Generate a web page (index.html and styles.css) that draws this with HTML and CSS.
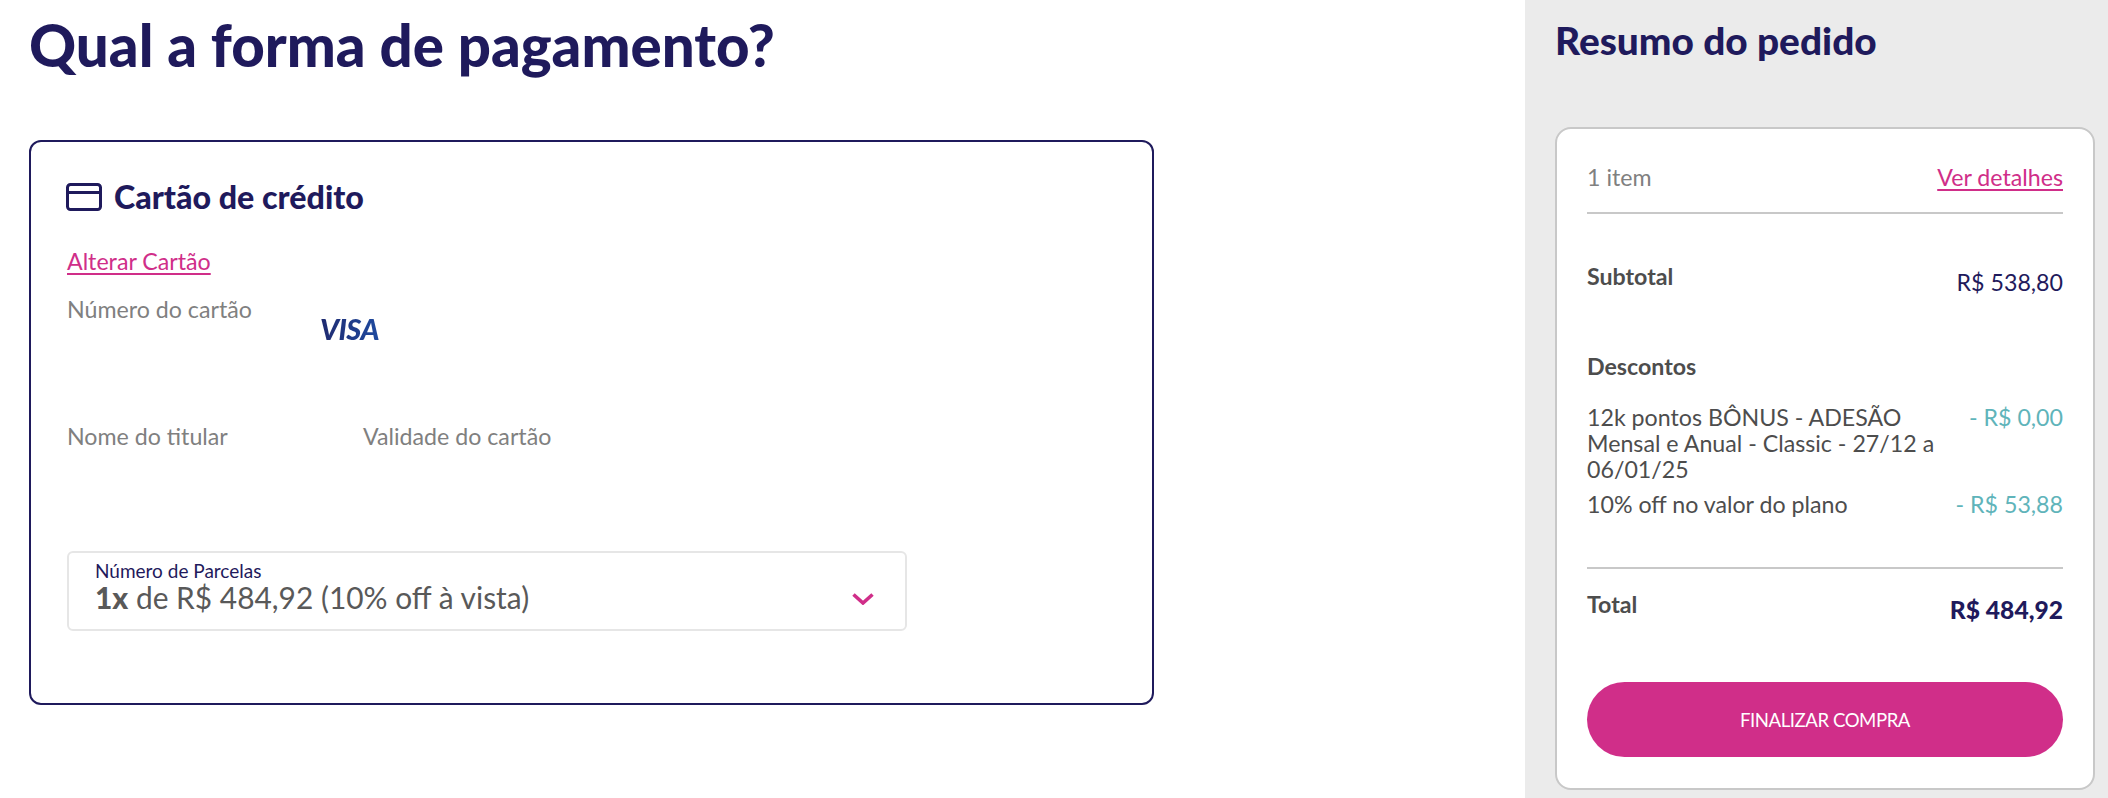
FILE: index.html
```html
<!DOCTYPE html>
<html lang="pt-BR">
<head>
<meta charset="utf-8">
<title>Qual a forma de pagamento?</title>
<link rel="stylesheet" href="styles.css">
</head>
<body>
<div class="page">
  <main class="main">
    <h1 class="title">Qual a forma de pagamento?</h1>
    <section class="pay-card">
      <div class="pay-head">
        <svg class="card-icon" viewBox="0 0 36 28" width="36" height="28" aria-hidden="true">
          <rect x="1.5" y="1.5" width="33" height="25" rx="3" fill="none" stroke="#1f1a5c" stroke-width="3"/>
          <path d="M2 9.5h32" stroke="#1f1a5c" stroke-width="3"/>
        </svg>
        <h2 class="pay-title">Cartão de crédito</h2>
      </div>
      <a class="link change" href="#">Alterar Cartão</a>
      <div class="number-row">
        <span class="label">Número do cartão</span>
        <span class="visa">VISA</span>
      </div>
      <div class="holder-row">
        <span class="label holder">Nome do titular</span>
        <span class="label">Validade do cartão</span>
      </div>
      <div class="select">
        <div class="select-text">
          <div class="select-label">Número de Parcelas</div>
          <div class="select-value"><b>1x</b> de R$ 484,92 (10% off à vista)</div>
        </div>
        <svg class="chevron" viewBox="0 0 22 12" width="22" height="12" aria-hidden="true">
          <path d="M1.5 1.5 11 10l9.5-8.5" fill="none" stroke="#d02e89" stroke-width="3.6"/>
        </svg>
      </div>
    </section>
  </main>
  <aside class="aside">
    <h2 class="aside-title">Resumo do pedido</h2>
    <section class="summary">
      <div class="row items">
        <span class="muted">1 item</span>
        <a class="link" href="#">Ver detalhes</a>
      </div>
      <div class="row subtotal">
        <span class="strong">Subtotal</span>
        <span class="navy price-low">R$ 538,80</span>
      </div>
      <div class="strong disc-title">Descontos</div>
      <div class="row disc">
        <span class="disc-name">12k pontos BÔNUS - ADESÃO Mensal e Anual - Classic - 27/12 a 06/01/25</span>
        <span class="teal">- R$ 0,00</span>
      </div>
      <div class="row disc second">
        <span class="disc-name">10% off no valor do plano</span>
        <span class="teal">- R$ 53,88</span>
      </div>
      <div class="row total">
        <span class="strong">Total</span>
        <span class="total-value price-low">R$ 484,92</span>
      </div>
      <button class="cta" type="button">FINALIZAR COMPRA</button>
    </section>
  </aside>
</div>
</body>
</html>
```
FILE: styles.css
```css
* { box-sizing: border-box; }
html, body { margin: 0; height: 100%; }
body {
  background: #fff;
  font-family: "Lato", "Noto Sans", sans-serif;
  font-size: 23.2px;
  color: #4d4d4d;
  overflow: hidden;
}
h1, h2 { margin: 0; }
.page { display: flex; height: 798px; }
.main { width: 1525px; padding-left: 29px; }
.title {
  font-size: 58.2px;
  line-height: 70px;
  font-weight: 900;
  color: #1f1a5c;
  padding-top: 10px;
  margin-bottom: 60px;
}
.pay-card {
  width: 1125px;
  height: 565px;
  padding: 40px 36px 0;
  border: 2px solid #1f1a5c;
  border-radius: 12px;
}
.pay-head { display: flex; align-items: center; gap: 12px; height: 30px; margin-left: -1px; }
.card-icon { flex: none; }
.pay-title { font-size: 32.2px; line-height: 30px; font-weight: 900; color: #1f1a5c; }
.link { color: #d02e89; text-decoration: underline; text-decoration-thickness: 2px; text-underline-offset: 3px; }
.change { display: block; width: max-content; margin-top: 36px; line-height: 26px; }
.number-row { display: flex; margin-top: 22px; line-height: 26px; }
.label { color: #808080; }
.visa {
  margin: 20px 0 0 68px;
  font-size: 29px;
  line-height: 26px;
  font-weight: 900;
  font-style: italic;
  letter-spacing: -0.5px;
  background: linear-gradient(90deg, #1f2a6f, #1f4a9f);
  -webkit-background-clip: text;
  background-clip: text;
  color: transparent;
}
.holder-row { display: flex; margin-top: 81px; line-height: 26px; }
.holder { width: 296px; }
.select {
  display: flex;
  align-items: center;
  justify-content: space-between;
  width: 840px;
  height: 80px;
  margin-top: 102px;
  padding: 0 31px 9px 26px;
  border: 2px solid #e6e6e6;
  border-radius: 6px;
}
.select-label { font-size: 19px; line-height: 20px; color: #1f1a5c; }
.select-value { font-size: 29.9px; line-height: 32px; color: #595959; }
.select-value b { font-weight: 900; }
.chevron { flex: none; margin-top: 25px; }
.aside { flex: 1; background: #ebebeb; padding-left: 30px; }
.aside-title {
  font-size: 38.8px;
  line-height: 46px;
  font-weight: 900;
  color: #1f1a5c;
  padding-top: 17px;
  margin-bottom: 64px;
}
.summary {
  width: 540px;
  height: 663px;
  padding: 0 30px;
  background: #fff;
  border: 2px solid #c8c8c8;
  border-radius: 16px;
}
.row { display: flex; justify-content: space-between; }
.items {
  height: 85px;
  padding-top: 35px;
  line-height: 26px;
  border-bottom: 2px solid #c8c8c8;
}
.muted { color: #808080; }
.strong { font-weight: 700; color: #4d4d4d; }
.navy { color: #1f1a5c; }
.price-low { padding-top: 6px; }
.subtotal { margin-top: 49px; line-height: 26px; }
.disc-title { margin-top: 58px; line-height: 26px; }
.disc { margin-top: 25px; line-height: 26px; }
.disc.second { margin-top: 9px; padding-bottom: 50px; border-bottom: 2px solid #c8c8c8; }
.disc-name { width: 360px; }
.teal { color: #5fb4ba; }
.total { margin-top: 22px; line-height: 26px; }
.total-value { font-size: 24.6px; font-weight: 900; color: #1f1a5c; }
.cta {
  display: block;
  width: 100%;
  height: 75px;
  margin-top: 59px;
  border: 0;
  border-radius: 38px;
  background: #d02e89;
  color: #fff;
  font: 400 18.6px "Lato", "Noto Sans", sans-serif;
  letter-spacing: -0.45px;
}
```
